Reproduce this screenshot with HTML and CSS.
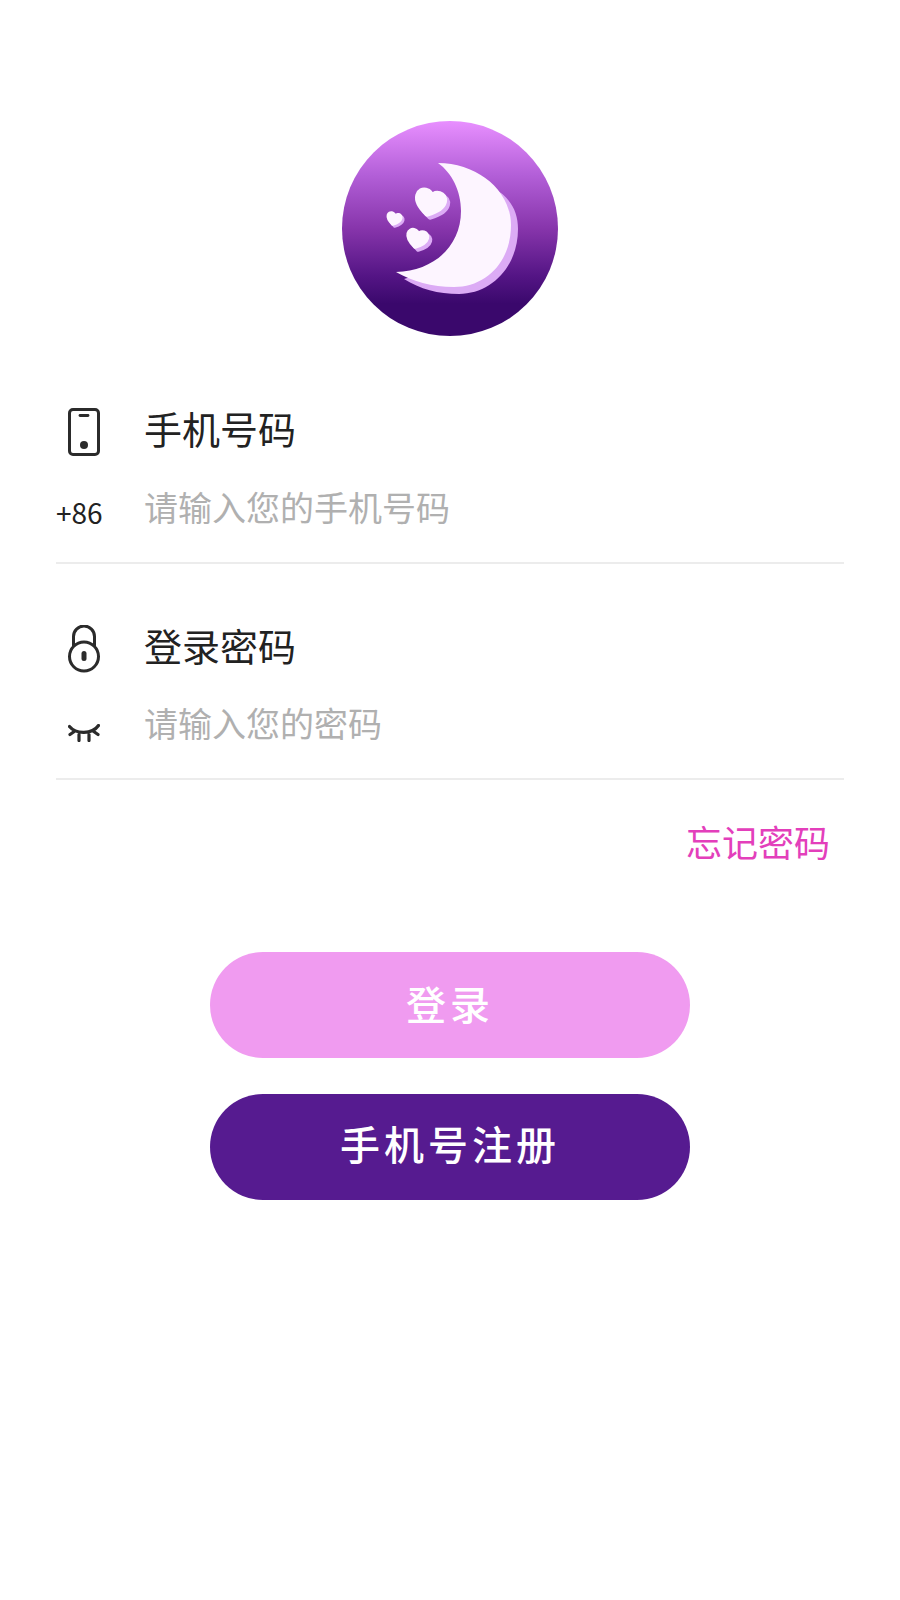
FILE: index.html
```html
<!DOCTYPE html>
<html lang="zh">
<head>
<meta charset="utf-8">
<title>登录</title>
<link rel="stylesheet" href="styles.css">
</head>
<body>
<main class="page">
  <div class="logo">
    <svg viewBox="0 0 216 216" width="216" height="216">
      <defs>
        <linearGradient id="bg" x1="0" y1="0" x2="0" y2="1">
          <stop offset="0" stop-color="#e88fff"/>
          <stop offset="0.25" stop-color="#b35fd8"/>
          <stop offset="0.5" stop-color="#8735ab"/>
          <stop offset="0.72" stop-color="#541585"/>
          <stop offset="0.85" stop-color="#3a086c"/>
          <stop offset="1" stop-color="#3a086c"/>
        </linearGradient>
        <path id="heart" stroke-width="5" stroke-linejoin="round" d="M0 10C-7 6-12 2-12-4C-12-8-9-10-6.500-10C-4-10-1-9 0-5C1-9 4-10 6.500-10C9-10 12-8 12-4C12 2 7 6 0 10Z"/>
      </defs>
      <ellipse cx="108" cy="107.500" rx="108" ry="107.500" fill="url(#bg)"/>
      <path fill="#dcabf5" d="M150 66C168 76 176 90 176 108C176 145 150 173 117 173C96 173 78 168 62 158L120 140Z"/>
      <path fill="#fdf5ff" d="M96 42C136 42 169 70 169 104C169 140 145 166 112 166C90 166 70 160 54 151C92 150 119 125 119 90C119 70 110 52 96 42Z"/>
      <g fill="#dcabf5" stroke="#dcabf5">
        <use href="#heart" transform="translate(91 85) rotate(14) scale(1.12)"/>
        <use href="#heart" transform="translate(78 121) rotate(14) scale(.8)"/>
        <use href="#heart" transform="translate(54 100) rotate(14) scale(.56)"/>
      </g>
      <g fill="#fdf5ff" stroke="#fdf5ff">
        <use href="#heart" transform="translate(88 82) rotate(14) scale(1.12)"/>
        <use href="#heart" transform="translate(75 118) rotate(14) scale(.8)"/>
        <use href="#heart" transform="translate(52 98) rotate(14) scale(.56)"/>
      </g>
    </svg>
  </div>

  <section class="field field-phone">
    <div class="row row-label">
      <span class="slot">
        <svg class="icon" viewBox="0 0 32 48" width="32" height="48">
          <rect x="1.500" y="1.500" width="29" height="45" rx="3.500" fill="none" stroke="#2b2b2b" stroke-width="3"/>
          <path d="M12 7.500h8" stroke="#2b2b2b" stroke-width="2.800" stroke-linecap="round"/>
          <circle cx="16" cy="37" r="4" fill="#2b2b2b"/>
        </svg>
      </span>
      <span class="label">手机号码</span>
    </div>
    <div class="row row-input">
      <span class="slot prefix">+86</span>
      <span class="placeholder">请输入您的手机号码</span>
    </div>
  </section>

  <section class="field field-password">
    <div class="row row-label">
      <span class="slot">
        <svg class="icon" viewBox="0 0 32 48" width="32" height="48">
          <circle cx="16" cy="31.500" r="14.500" fill="none" stroke="#2b2b2b" stroke-width="3"/>
          <path d="M5.500 21V11.500A10.500 10.500 0 0 1 26.500 11.500V21" fill="none" stroke="#2b2b2b" stroke-width="3"/>
          <path d="M16 28.500v5" stroke="#2b2b2b" stroke-width="5" stroke-linecap="round"/>
        </svg>
      </span>
      <span class="label">登录密码</span>
    </div>
    <div class="row row-input">
      <span class="slot">
        <svg class="eye" viewBox="0 0 32 18" width="32" height="18">
          <path d="M1.500 2.500C8 10.500 24 10.500 30.500 1.500M2 10.500L7 7M30 10.500L25 7M11 10.500V16.500M21 10.500V16.500" fill="none" stroke="#2b2b2b" stroke-width="3.200" stroke-linecap="round"/>
        </svg>
      </span>
      <span class="placeholder">请输入您的密码</span>
    </div>
  </section>

  <div class="forgot-row"><a class="forgot">忘记密码</a></div>

  <div class="actions">
    <button class="btn btn-login">登录</button>
    <button class="btn btn-register">手机号注册</button>
  </div>
</main>
</body>
</html>
```

FILE: styles.css
```css
* { box-sizing: border-box; }
html, body { margin: 0; padding: 0; background: #fff; }
body {
  width: 900px;
  height: 1600px;
  overflow: hidden;
  font-family: "Noto Sans CJK SC", "Noto Sans", sans-serif;
}
.page { padding: 121px 56px 0; }
.logo { display: flex; justify-content: center; height: 216px; }
.logo svg { display: block; }

.field {
  height: 216px;
  border-bottom: 2px solid #ececec;
  display: flex;
  flex-direction: column;
}
.field-phone { margin-top: 10px; height: 217px; padding-top: 61px; }
.field-password { padding-top: 61px; }

.row { display: flex; align-items: center; }
.row-label { height: 48px; }
.row-input { height: 48px; margin-top: 30px; }
.slot { width: 88px; flex: none; padding-left: 12px; display: flex; align-items: center; }
.icon, .eye { display: block; }
.label { font-size: 38px; line-height: 40px; padding-bottom: 8px; color: #222; }
.placeholder { font-size: 34px; line-height: 40px; padding-bottom: 6px; color: #b0b0b0; }
.field-password .placeholder { padding-bottom: 9px; }
.prefix { padding-left: 0; padding-top: 4px; font-size: 28px; line-height: 40px; color: #222; }
.field-password .row-input .slot { padding-top: 12px; }

.forgot-row { display: flex; justify-content: flex-end; padding: 37px 14px 0 0; }
.forgot { font-size: 36px; line-height: 48px; color: #e33fbb; }

.actions {
  margin-top: 87px;
  display: flex;
  flex-direction: column;
  align-items: center;
  gap: 36px;
}
.btn {
  width: 480px;
  height: 106px;
  border: 0;
  border-radius: 53px;
  padding: 0 0 8px;
  font-family: inherit;
  font-size: 40px;
  font-weight: 500;
  letter-spacing: 4px;
  color: #fff;
}
.btn-login { background: #f09bf0; padding-bottom: 5px; }
.btn-register { background: #561b90; }
```
